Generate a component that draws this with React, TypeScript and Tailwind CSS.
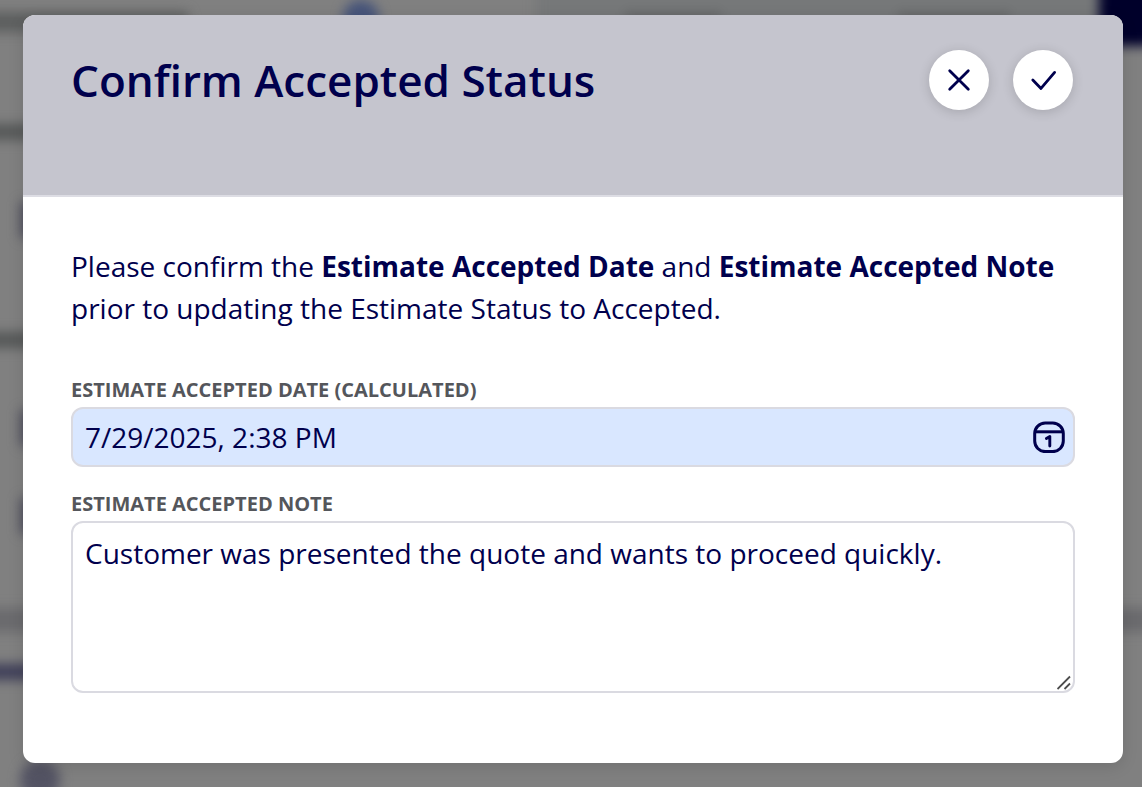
import { useState } from "react";

function CloseIcon() {
  return (
    <svg width="24" height="24" viewBox="0 0 24 24" fill="none" aria-hidden="true">
      <path d="M2.7 2.7L21.3 21.3M21.3 2.7L2.7 21.3" stroke="currentColor" strokeWidth="2.8" strokeLinecap="round" />
    </svg>
  );
}

function CheckIcon() {
  return (
    <svg width="28" height="24" viewBox="0 0 28 24" fill="none" aria-hidden="true">
      <path
        d="M3.8 12L12 20.4L25.6 4.4"
        stroke="currentColor"
        strokeWidth="2.8"
        strokeLinecap="round"
        strokeLinejoin="round"
      />
    </svg>
  );
}

function CalendarIcon() {
  return (
    <svg width="32" height="32" viewBox="0 0 32 32" fill="none" aria-hidden="true">
      <rect x="1.7" y="2" width="28.6" height="28.6" rx="10.5" stroke="currentColor" strokeWidth="3" />
      <path d="M2.5 10.8H29.5" stroke="currentColor" strokeWidth="3" />
      <path
        d="M13.4 17.4L16.8 15.4V25"
        stroke="currentColor"
        strokeWidth="2.9"
        strokeLinecap="round"
        strokeLinejoin="round"
      />
    </svg>
  );
}

// Out of focus record page behind the dialog
function Backdrop() {
  return (
    <div className="absolute inset-0 overflow-hidden bg-[#808080]" aria-hidden="true">
      <div className="-m-5 blur-[6px]">
        <div className="flex h-[68px] items-start">
          <div className="mt-8 h-5 w-52 bg-[#5c5e5e]" />
          <div className="mt-5 ml-[155px] size-9 rounded-full bg-[#46547a]" />
          <div className="ml-[157px] flex h-14 flex-1 items-end justify-around bg-[#767879]">
            <div className="h-6 w-24 bg-[#666869]" />
            <div className="h-6 w-28 bg-[#666869]" />
          </div>
          <div className="h-[66px] w-[63px] bg-[#00002a]" />
        </div>

        <div className="flex flex-col gap-8 pt-10">
          <div>
            <div className="flex h-[88px] items-center">
              <div className="h-4 w-16 bg-[#555757]" />
            </div>
            <div className="flex h-[88px] items-center pl-10">
              <div className="size-9 bg-[#50505e]" />
            </div>
          </div>
          <div>
            <div className="flex h-[88px] items-center">
              <div className="h-4 w-16 bg-[#555757]" />
            </div>
            <div className="flex h-[88px] items-center pl-10">
              <div className="size-9 bg-[#50505e]" />
            </div>
            <div className="flex h-[88px] items-center pl-10">
              <div className="size-9 bg-[#50505e]" />
            </div>
          </div>
        </div>

        <div className="mt-12 h-6 bg-[#6a6a6d]" />
        <div className="flex h-20 items-center">
          <div className="h-4 w-16 bg-[#3e3e58]" />
        </div>
        <div className="mt-6 flex h-[88px] items-center pl-10">
          <div className="size-10 rounded-full bg-[#535363]" />
        </div>
      </div>
    </div>
  );
}

const roundButton =
  "flex size-[60px] items-center justify-center rounded-full bg-white shadow-[0_2px_12px_rgba(0,0,0,0.16)]";
const fieldLabel = "block text-[20px] leading-[34px] font-bold text-[#54565b] uppercase";
const fieldBox = "block w-full rounded-xl border-2 border-[#dadae1] px-3 text-[28px] outline-none";

export default function App() {
  const [date, setDate] = useState("7/29/2025, 2:38 PM");
  const [note, setNote] = useState("Customer was presented the quote and wants to proceed quickly.");

  return (
    <div className="relative min-h-screen pt-[15px] pr-[19px] pb-6 pl-[23px] font-['Open_Sans','Noto_Sans',sans-serif] text-[#00004d]">
      <Backdrop />

      <form
        role="dialog"
        aria-labelledby="dialog-title"
        onSubmit={(e) => e.preventDefault()}
        className="relative overflow-hidden rounded-xl bg-white shadow-[0_4px_16px_rgba(0,0,0,0.12)]"
      >
        <header className="flex min-h-[182px] items-start justify-between border-b-2 border-[#dddde4] bg-[#c5c5ce] pt-[35px] pr-[50px] pl-12">
          <h1 id="dialog-title" className="text-[44px] leading-[60px] font-semibold">
            Confirm Accepted Status
          </h1>
          <div className="flex gap-6">
            <button type="button" aria-label="Cancel" className={roundButton}>
              <CloseIcon />
            </button>
            <button type="submit" aria-label="Confirm" className={roundButton}>
              <CheckIcon />
            </button>
          </div>
        </header>

        <div className="px-12 pt-12 pb-[70px]">
          <p className="mb-11 text-[28px] leading-[42px]">
            Please confirm the <strong>Estimate Accepted Date</strong> and{" "}
            <strong>Estimate Accepted Note</strong> prior to updating the Estimate Status to Accepted.
          </p>

          <div className="flex flex-col gap-5">
            <div>
              <label htmlFor="accepted-date" className={fieldLabel}>
                Estimate Accepted Date (Calculated)
              </label>
              <div className="relative">
                <input
                  id="accepted-date"
                  type="text"
                  value={date}
                  onChange={(e) => setDate(e.target.value)}
                  className={`${fieldBox} h-[60px] bg-[#d9e7ff]`}
                />
                <button
                  type="button"
                  aria-label="Open calendar"
                  className="absolute inset-y-0 right-2.5 flex items-center"
                >
                  <CalendarIcon />
                </button>
              </div>
            </div>

            <div>
              <label htmlFor="accepted-note" className={fieldLabel}>
                Estimate Accepted Note
              </label>
              <div className="relative">
                <textarea
                  id="accepted-note"
                  value={note}
                  onChange={(e) => setNote(e.target.value)}
                  className={`${fieldBox} h-[172px] resize-none bg-white py-[9px] leading-[42px]`}
                />
                {/* Resize grip */}
                <svg
                  width="16"
                  height="16"
                  viewBox="0 0 16 16"
                  className="pointer-events-none absolute right-0.5 bottom-0.5"
                  aria-hidden="true"
                >
                  <path d="M0.5 14L13 1.5M7.5 14L13 8.5" stroke="#4d4d4d" strokeWidth="1.8" />
                </svg>
              </div>
            </div>
          </div>
        </div>
      </form>
    </div>
  );
}
